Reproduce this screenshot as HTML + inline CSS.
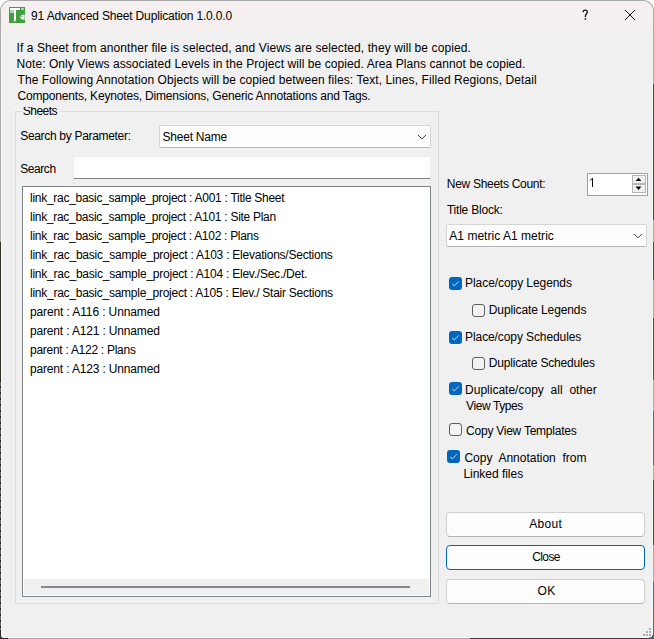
<!DOCTYPE html>
<html><head><meta charset="utf-8">
<style>
html,body{margin:0;padding:0}
body{width:654px;height:639px;position:relative;overflow:hidden;background:#5d6b70;font-family:"Liberation Sans",sans-serif;font-size:12px;color:#000}
.win{position:absolute;left:0;top:0;width:652px;height:637px;border:1px solid rgba(0,0,0,.34);border-radius:11px 11px 6px 4px;background:#f0f0f0;background-clip:padding-box;overflow:hidden;box-shadow:inset 1px 0 0 #fafafa,inset -1px -1px 0 #f8f8f8}
.tb{position:absolute;left:0;top:0;width:652px;height:30px;background:#f5efef}
.t{position:absolute;white-space:pre;line-height:16px;font-size:12px}
.box{position:absolute;box-sizing:border-box}
</style></head><body>
<div style="position:absolute;left:0;top:0;width:654px;height:639px;background:#fff"></div>
<div style="position:absolute;left:0;top:242px;width:1px;height:138px;background:#48493a"></div>
<div style="position:absolute;left:0;top:380px;width:1px;height:255px;background:repeating-linear-gradient(to bottom,#303030 0 2px,#9a9a9a 2px 6px)"></div>
<div style="position:absolute;left:470px;top:638px;width:184px;height:1px;background:#555a5a"></div>
<div style="position:absolute;left:642px;top:628px;width:12px;height:11px;background:#56656b"></div>
<div style="position:absolute;left:0px;top:630px;width:8px;height:9px;background:#3a3a3a"></div>
<div class="win">
 <div class="tb"></div>
</div>
<!-- icon -->
<svg style="position:absolute;left:9px;top:7px" width="16" height="16" viewBox="0 0 16 16" shape-rendering="crispEdges">
 <rect x="0" y="0" width="16" height="16" fill="#42a042"/>
 <rect x="1" y="3" width="4" height="3" fill="#a3d9a3"/>
 <rect x="12" y="1" width="3" height="2" fill="#a3d9a3"/>
 <rect x="1" y="1" width="10" height="2" fill="#fff"/>
 <path d="M5 3 L7 3 L7 12 L6.2 14.5 L5 14.5 Z" fill="#fff" shape-rendering="auto"/>
 <path d="M15.5 7.5 L12.5 8 L11.2 10 L12 12 L15.5 13 Z" fill="#fff" shape-rendering="auto"/>
 <rect x="12" y="9" width="1.5" height="1" fill="#8cc88c"/>
</svg>
<!-- title buttons -->
<svg style="position:absolute;left:624px;top:9px" width="12" height="12" viewBox="0 0 12 12">
 <path d="M1 1 L11 11 M11 1 L1 11" stroke="#111" stroke-width="1"/>
</svg>
<svg style="position:absolute;left:580px;top:8px" width="10" height="14" viewBox="0 0 10 14"><path d="M3.1 4.2 C3.1 2.4 4.2 2.1 5.2 2.1 C6.6 2.1 7.3 3 7.3 4.1 C7.3 5.6 5.4 6 5.4 8.2 L5.4 9" fill="none" stroke="#111" stroke-width="1.3"/><circle cx="5.4" cy="10.9" r=".85" fill="#111"/></svg>

<!-- group box -->
<div class="box" style="left:15px;top:111px;width:424px;height:493px;border:1px solid #dcdcdc"></div>
<!-- sheet name combobox -->
<div class="box" style="left:159px;top:125px;width:272px;height:23px;border:1px solid #d5d5d5;border-bottom-color:#b8b8b8;background:#fdfdfd;border-radius:2px"></div>
<svg style="position:absolute;left:417px;top:133px" width="10" height="7" viewBox="0 0 10 7"><path d="M1 2 L5 5.8 L9 2" fill="none" stroke="#333" stroke-width="0.95"/></svg>
<!-- search textbox -->
<div class="box" style="left:73px;top:156px;width:358px;height:23px;border:1px dotted #e3e3e3;border-bottom:1px solid #80848a;background:#fff"></div>
<!-- listbox -->
<div class="box" style="left:22px;top:186px;width:409px;height:411px;border:1px solid #7f838a;background:#fff"></div>
<div class="box" style="left:24px;top:579px;width:405px;height:16px;background:#f0f0f0"></div>
<div class="box" style="left:41px;top:586px;width:369px;height:2px;background:#85878c"></div>

<!-- numeric up down -->
<div class="box" style="left:587px;top:173px;width:61px;height:23px;border:1px solid #a0a0a0;background:#fff"></div>
<div class="box" style="left:632px;top:175px;width:14px;height:9px;border:1px solid #b5b5b5;background:#f0f0f0"></div>
<div class="box" style="left:632px;top:184px;width:14px;height:9px;border:1px solid #b5b5b5;background:#f0f0f0"></div>
<svg style="position:absolute;left:632px;top:175px" width="14" height="18" viewBox="0 0 14 18"><path d="M3.6 6.1 L6.5 2.7 L9.4 6.1 Z M3.6 11.6 L9.4 11.6 L6.5 15 Z" fill="#000"/></svg>
<svg style="position:absolute;left:588px;top:176px" width="8" height="12" viewBox="0 0 8 12"><rect x="4" y="2" width="1" height="9" fill="#111"/><path d="M2.1 4.3 L4.6 2.4" stroke="#1a1a1a" stroke-width="1"/></svg>
<!-- title block combobox -->
<div class="box" style="left:446px;top:224px;width:201px;height:23px;border:1px solid #d5d5d5;border-bottom-color:#b8b8b8;background:#fdfdfd;border-radius:2px"></div>
<svg style="position:absolute;left:633px;top:232px" width="10" height="7" viewBox="0 0 10 7"><path d="M1 2 L5 5.8 L9 2" fill="none" stroke="#333" stroke-width="0.95"/></svg>

<!-- checkboxes -->
<div class="box" style="left:449px;top:277px;width:13px;height:13px;background:#0067c0;border-radius:3px"></div><svg style="position:absolute;left:449px;top:277px" width="13" height="13" viewBox="0 0 13 13"><path d="M3.2 6.8 L5.3 8.9 L9.8 4.4" fill="none" stroke="#f2f6fb" stroke-width="0.85"/></svg>
<div class="box" style="left:472px;top:304px;width:13px;height:13px;border:1px solid #5f5f5f;background:#f3f3f3;border-radius:3px"></div>
<div class="box" style="left:449px;top:331px;width:13px;height:13px;background:#0067c0;border-radius:3px"></div><svg style="position:absolute;left:449px;top:331px" width="13" height="13" viewBox="0 0 13 13"><path d="M3.2 6.8 L5.3 8.9 L9.8 4.4" fill="none" stroke="#f2f6fb" stroke-width="0.85"/></svg>
<div class="box" style="left:472px;top:357px;width:13px;height:13px;border:1px solid #5f5f5f;background:#f3f3f3;border-radius:3px"></div>
<div class="box" style="left:449px;top:382px;width:13px;height:13px;background:#0067c0;border-radius:3px"></div><svg style="position:absolute;left:449px;top:382px" width="13" height="13" viewBox="0 0 13 13"><path d="M3.2 6.8 L5.3 8.9 L9.8 4.4" fill="none" stroke="#f2f6fb" stroke-width="0.85"/></svg>
<div class="box" style="left:449px;top:423px;width:13px;height:13px;border:1px solid #5f5f5f;background:#f3f3f3;border-radius:3px"></div>
<div class="box" style="left:447px;top:450px;width:13px;height:13px;background:#0067c0;border-radius:3px"></div><svg style="position:absolute;left:447px;top:450px" width="13" height="13" viewBox="0 0 13 13"><path d="M3.2 6.8 L5.3 8.9 L9.8 4.4" fill="none" stroke="#f2f6fb" stroke-width="0.85"/></svg>

<!-- buttons -->
<div class="box" style="left:446px;top:512px;width:199px;height:25px;border:1px solid #d0d0d0;border-bottom-color:#b5b5b5;background:#fdfdfd;border-radius:4px"></div>
<div class="box" style="left:446px;top:545px;width:199px;height:25px;border:1px solid #0067c0;background:#fdfdfd;border-radius:4px"></div>
<div class="box" style="left:446px;top:579px;width:199px;height:25px;border:1px solid #d0d0d0;border-bottom-color:#b5b5b5;background:#fdfdfd;border-radius:4px"></div>

<div style="position:absolute;left:653px;top:84px;width:1px;height:136px;background:#484a3a"></div>
<div style="position:absolute;left:653px;top:242px;width:1px;height:38px;background:#484a3a"></div>
<div style="position:absolute;left:653px;top:318px;width:1px;height:62px;background:#50534a"></div>
<div style="position:absolute;left:653px;top:411px;width:1px;height:54px;background:#56656b"></div>
<div style="position:absolute;left:653px;top:480px;width:1px;height:65px;background:#484a3a"></div>
<div style="position:absolute;left:653px;top:582px;width:1px;height:54px;background:#56656b"></div>
<!-- grip -->
<div class="box" style="left:649px;top:628px;width:2px;height:2px;background:#ababab;box-shadow:1px 1px 0 #fafafa"></div>
<div class="box" style="left:646px;top:631px;width:2px;height:2px;background:#ababab;box-shadow:1px 1px 0 #fafafa"></div>
<div class="box" style="left:649px;top:631px;width:2px;height:2px;background:#ababab;box-shadow:1px 1px 0 #fafafa"></div>
<div class="box" style="left:643px;top:634px;width:2px;height:2px;background:#ababab;box-shadow:1px 1px 0 #fafafa"></div>
<div class="box" style="left:646px;top:634px;width:2px;height:2px;background:#ababab;box-shadow:1px 1px 0 #fafafa"></div>
<div class="box" style="left:649px;top:634px;width:2px;height:2px;background:#ababab;box-shadow:1px 1px 0 #fafafa"></div>

<div class="t" style="left:31.10px;top:7.64px;letter-spacing:-0.161px;">91 Advanced Sheet Duplication 1.0.0.0</div>
<div class="t" style="left:16.50px;top:39.64px;letter-spacing:0.088px;">If a Sheet from anonther file is selected, and Views are selected, they will be copied.</div>
<div class="t" style="left:16.50px;top:55.64px;letter-spacing:0.074px;">Note: Only Views associated Levels in the Project will be copied. Area Plans cannot be copied.</div>
<div class="t" style="left:17.50px;top:71.64px;letter-spacing:0.079px;">The Following Annotation Objects will be copied between files: Text, Lines, Filled Regions, Detail</div>
<div class="t" style="left:17.50px;top:87.64px;letter-spacing:-0.176px;">Components, Keynotes, Dimensions, Generic Annotations and Tags.</div>
<div class="t" style="left:20.20px;top:127.74px;letter-spacing:-0.311px;">Search by Parameter:</div>
<div class="t" style="left:20.30px;top:160.84px;letter-spacing:-0.450px;">Search</div>
<div class="t" style="left:162.60px;top:129.34px;letter-spacing:-0.237px;">Sheet Name</div>
<div class="t" style="left:30.00px;top:189.84px;letter-spacing:-0.277px;">link_rac_basic_sample_project : A001 : Title Sheet</div>
<div class="t" style="left:30.00px;top:208.84px;letter-spacing:-0.283px;">link_rac_basic_sample_project : A101 : Site Plan</div>
<div class="t" style="left:30.00px;top:227.84px;letter-spacing:-0.290px;">link_rac_basic_sample_project : A102 : Plans</div>
<div class="t" style="left:30.00px;top:246.84px;letter-spacing:-0.234px;">link_rac_basic_sample_project : A103 : Elevations/Sections</div>
<div class="t" style="left:30.00px;top:265.84px;letter-spacing:-0.237px;">link_rac_basic_sample_project : A104 : Elev./Sec./Det.</div>
<div class="t" style="left:30.00px;top:284.84px;letter-spacing:-0.252px;">link_rac_basic_sample_project : A105 : Elev./ Stair Sections</div>
<div class="t" style="left:30.00px;top:303.84px;letter-spacing:-0.118px;">parent : A116 : Unnamed</div>
<div class="t" style="left:30.00px;top:322.84px;letter-spacing:-0.164px;">parent : A121 : Unnamed</div>
<div class="t" style="left:30.00px;top:341.84px;letter-spacing:-0.275px;">parent : A122 : Plans</div>
<div class="t" style="left:30.00px;top:360.84px;letter-spacing:-0.164px;">parent : A123 : Unnamed</div>
<div class="t" style="left:446.80px;top:175.74px;letter-spacing:-0.287px;">New Sheets Count:</div>
<div class="t" style="left:446.90px;top:201.74px;letter-spacing:-0.208px;">Title Block:</div>
<div class="t" style="left:449.30px;top:228.34px;letter-spacing:0.028px;">A1 metric A1 metric</div>
<div class="t" style="left:465.10px;top:274.84px;letter-spacing:-0.072px;">Place/copy Legends</div>
<div class="t" style="left:488.80px;top:302.44px;letter-spacing:-0.112px;">Duplicate Legends</div>
<div class="t" style="left:465.10px;top:328.94px;letter-spacing:-0.100px;">Place/copy Schedules</div>
<div class="t" style="left:488.80px;top:354.84px;letter-spacing:-0.178px;">Duplicate Schedules</div>
<div class="t" style="left:465.10px;top:382.34px;word-spacing:3.450px;">Duplicate/copy all other</div>
<div class="t" style="left:466.10px;top:397.84px;letter-spacing:-0.420px;">View Types</div>
<div class="t" style="left:466.10px;top:423.24px;letter-spacing:-0.244px;">Copy View Templates</div>
<div class="t" style="left:464.40px;top:450.24px;word-spacing:3.300px;">Copy Annotation from</div>
<div class="t" style="left:463.40px;top:465.64px;letter-spacing:-0.025px;">Linked files</div>
<div class="t" style="left:529.20px;top:515.64px;letter-spacing:0.300px;">About</div>
<div class="t" style="left:532.20px;top:549.34px;letter-spacing:-0.600px;">Close</div>
<div class="t" style="left:537.60px;top:583.24px;letter-spacing:0.300px;">OK</div>
<div style="position:absolute;left:22px;top:107px;width:38px;height:9px;overflow:hidden;background:#f0f0f0"><div class="t" style="left:0.80px;top:-4.46px;letter-spacing:-0.525px;">Sheets</div></div>

</body></html>
